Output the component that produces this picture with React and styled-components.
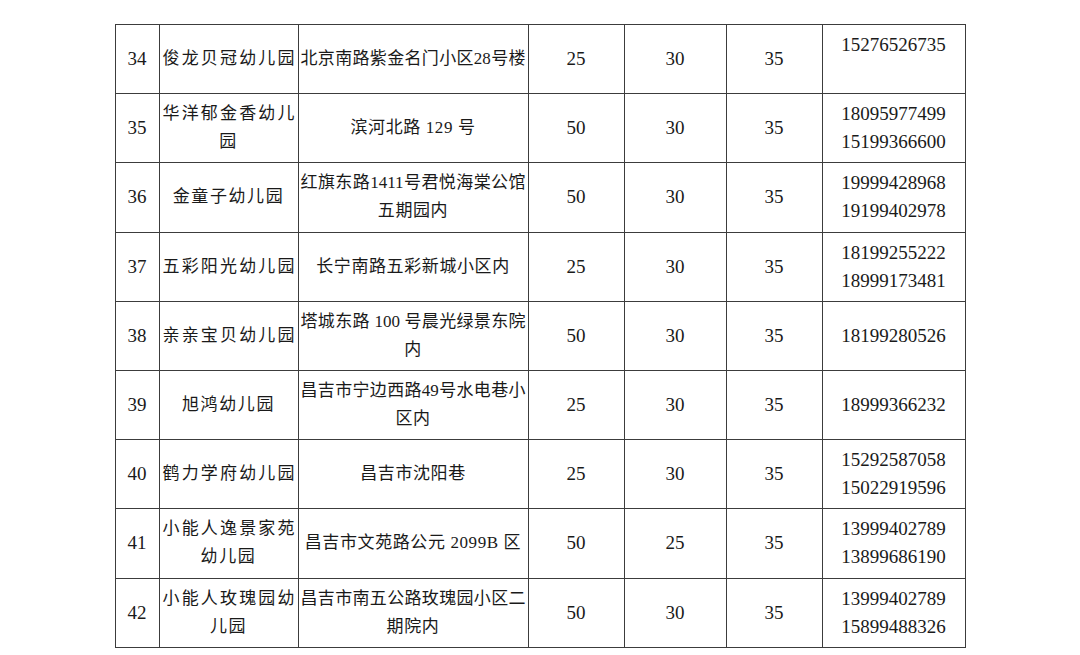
import React from 'react';
import styled, { createGlobalStyle } from 'styled-components';

const GlobalStyle = createGlobalStyle`
  html, body {
    margin: 0;
    padding: 0;
    background: #ffffff;
  }
`;

const rows = [
  { no: 34, name: [['俊龙贝冠幼儿园', true]], addr: [['北京南路紫金名门小区28号楼', true]], a: 25, b: 30, c: 35, phones: ['15276526735', ''] },
  { no: 35, name: [['华洋郁金香幼儿', true], ['园']], addr: [['滨河北路 129 号']], a: 50, b: 30, c: 35, phones: ['18095977499', '15199366600'] },
  { no: 36, name: [['金童子幼儿园']], addr: [['红旗东路1411号君悦海棠公馆', true], ['五期园内']], a: 50, b: 30, c: 35, phones: ['19999428968', '19199402978'] },
  { no: 37, name: [['五彩阳光幼儿园', true]], addr: [['长宁南路五彩新城小区内']], a: 25, b: 30, c: 35, phones: ['18199255222', '18999173481'] },
  { no: 38, name: [['亲亲宝贝幼儿园', true]], addr: [['塔城东路 100 号晨光绿景东院', true], ['内']], a: 50, b: 30, c: 35, phones: ['18199280526'] },
  { no: 39, name: [['旭鸿幼儿园']], addr: [['昌吉市宁边西路49号水电巷小', true], ['区内']], a: 25, b: 30, c: 35, phones: ['18999366232'] },
  { no: 40, name: [['鹤力学府幼儿园', true]], addr: [['昌吉市沈阳巷']], a: 25, b: 30, c: 35, phones: ['15292587058', '15022919596'] },
  { no: 41, name: [['小能人逸景家苑', true], ['幼儿园']], addr: [['昌吉市文苑路公元 2099B 区']], a: 50, b: 25, c: 35, phones: ['13999402789', '13899686190'] },
  { no: 42, name: [['小能人玫瑰园幼', true], ['儿园']], addr: [['昌吉市南五公路玫瑰园小区二', true], ['期院内']], a: 50, b: 30, c: 35, phones: ['13999402789', '15899488326'] },
];

const Sheet = styled.div`
  width: 851px;
  margin: 24px auto 0;
  display: grid;
  grid-template-columns: 43px 138px 229px 95px 101px 95px 142px;
  grid-auto-rows: 68.2px;
  gap: 1px;
  padding: 1px;
  box-sizing: border-box;
  background: #3c3c3c;
  color: #1a1a1a;
  font-family: "Liberation Serif", "Noto Sans CJK SC", serif;
`;

const Cell = styled.div`
  background: #ffffff;
  display: flex;
  flex-direction: column;
  justify-content: center;
  padding: 0 ${(p) => p.$pad || 0}px;
  font-size: ${(p) => p.$size || 19}px;
  letter-spacing: ${(p) => p.$spacing || 0}px;
  text-align: center;
  overflow: hidden;
`;

const Line = styled.span`
  display: block;
  line-height: 28px;
  min-height: 28px;
  white-space: nowrap;
  text-align: ${(p) => (p.$fill ? 'justify' : 'center')};
  text-align-last: ${(p) => (p.$fill ? 'justify' : 'center')};
  letter-spacing: ${(p) => (p.$fill ? 0 : 'inherit')};
`;

const Phone = styled.span`
  display: block;
  line-height: 28px;
  min-height: 28px;
`;

const Lines = ({ lines }) => lines.map(([text, fill], i) => (
  <Line key={i} $fill={fill}>{text}</Line>
));

const App = () => (
  <>
    <GlobalStyle />
    <Sheet>
      {rows.map((r) => (
        <React.Fragment key={r.no}>
          <Cell>{r.no}</Cell>
          <Cell $size={17} $spacing={1.6} $pad={3}><Lines lines={r.name} /></Cell>
          <Cell $size={17} $spacing={0.6} $pad={2}><Lines lines={r.addr} /></Cell>
          <Cell>{r.a}</Cell>
          <Cell>{r.b}</Cell>
          <Cell>{r.c}</Cell>
          <Cell>
            {r.phones.map((p, i) => <Phone key={i}>{p}</Phone>)}
          </Cell>
        </React.Fragment>
      ))}
    </Sheet>
  </>
);

export default App;
